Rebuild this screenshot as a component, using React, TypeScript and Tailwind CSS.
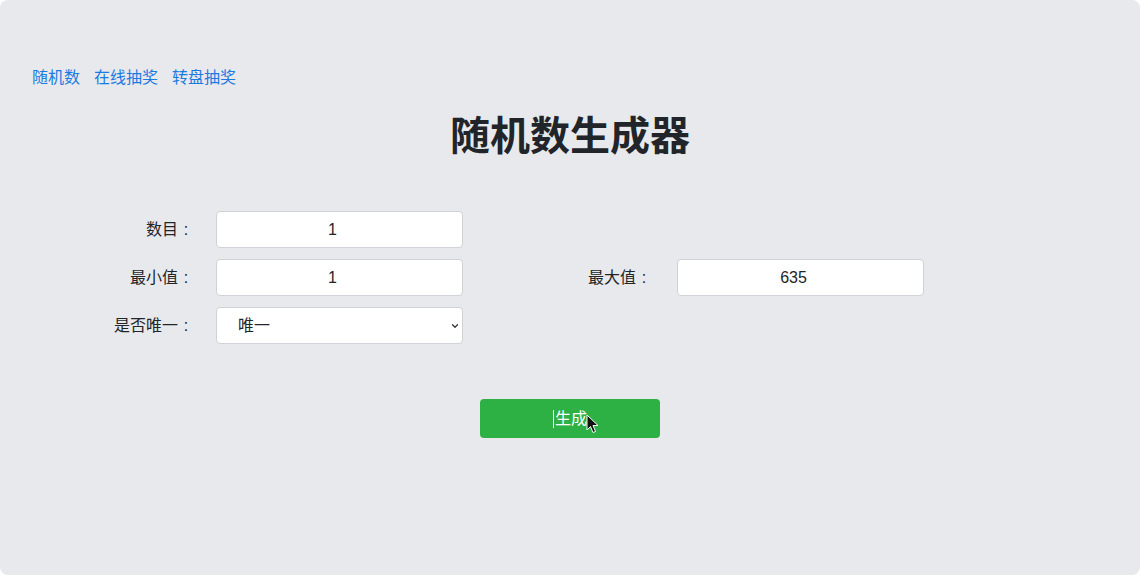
import { ChevronDown } from "lucide-react"

const font = { fontFamily: '"Liberation Sans", "Noto Sans CJK SC", sans-serif' }

function Field({ value }: { value: string }) {
  return (
    <input
      readOnly
      value={value}
      className="h-[37px] w-[247px] rounded-[4px] border border-[#cfd2d6] bg-white pr-[14px] text-center text-[16px] text-[#212529] outline-none"
    />
  )
}

function Label({ text, className }: { text: string; className: string }) {
  return (
    <label className={`flex justify-end ${className}`}>
      {text}
      <span className="inline-block w-[16px] text-center">:</span>
    </label>
  )
}

export default function App() {
  return (
    <div className="bg-white" style={font}>
      <div className="relative h-[575px] w-[1140px] overflow-hidden rounded-lg bg-[#e8e9ec]">
        {/* nav */}
        <nav className="flex gap-[14px] pl-[32px] pt-[67px] text-[16px] leading-[22px] text-[#1a7be0]">
          <a>随机数</a>
          <a>在线抽奖</a>
          <a>转盘抽奖</a>
        </nav>

        <h1 className="mt-[11px] text-center text-[40px] font-bold leading-[72px] text-[#212529]">随机数生成器</h1>

        {/* form */}
        <div className="mt-[39px] flex flex-col gap-[11px] text-[16px] text-[#212529]">
          <div className="flex items-center">
            <Label text="数目" className="w-[194px]" />
            <div className="ml-[22px]">
              <Field value="1" />
            </div>
          </div>
          <div className="flex items-center">
            <Label text="最小值" className="w-[194px]" />
            <div className="ml-[22px]">
              <Field value="1" />
            </div>
            <Label text="最大值" className="ml-[125px] w-[64px]" />
            <div className="ml-[25px]">
              <Field value="635" />
            </div>
          </div>
          <div className="flex items-center">
            <Label text="是否唯一" className="w-[194px]" />
            <div className="relative ml-[22px] flex h-[37px] w-[247px] items-center rounded-[4px] border border-[#cfd2d6] bg-white pl-[21px]">
              <span>唯一</span>
              <ChevronDown className="absolute right-[2px] top-[13px] h-[10px] w-[10px] text-[#333]" strokeWidth={3} />
            </div>
          </div>
        </div>

        <div className="mt-[55px] flex justify-center">
          <button className="relative flex h-[39px] w-[180px] items-center justify-center rounded-[4px] bg-[#2db044] text-[16px] text-white">
            <span className="mr-[1px] inline-block h-[18px] w-px bg-white" />
            生成
            <svg className="absolute left-[106px] top-[15px]" width="13" height="20" viewBox="0 0 13 20">
              <path d="M1 1 L1 16 L4.5 12.5 L7 18.5 L9.5 17.5 L7 11.5 L12 11.5 Z" fill="#111" stroke="#fff" strokeWidth="1" />
            </svg>
          </button>
        </div>
      </div>
    </div>
  )
}
